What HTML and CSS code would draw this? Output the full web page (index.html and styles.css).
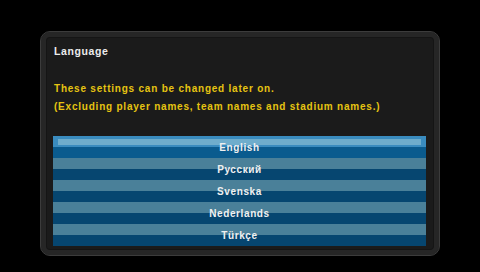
FILE: index.html
```html
<!DOCTYPE html>
<html>
<head>
<meta charset="utf-8">
<link rel="stylesheet" href="styles.css">
</head>
<body>
<div class="screen">
  <div class="panel">
    <div class="title">Language</div>
    <div class="notes">
      <div class="note">These settings can be changed later on.</div>
      <div class="note">(Excluding player names, team names and stadium names.)</div>
    </div>
    <ul class="list">
      <li class="item selected"><span>English</span></li>
      <li class="item"><span>Русский</span></li>
      <li class="item"><span>Svenska</span></li>
      <li class="item"><span>Nederlands</span></li>
      <li class="item"><span>Türkçe</span></li>
    </ul>
  </div>
</div>
</body>
</html>
```
FILE: styles.css
```css
html, body {
  margin: 0;
  padding: 0;
  background: #000;
}
.screen {
  width: 480px;
  height: 272px;
  padding: 31px 0 0 40px;
  box-sizing: border-box;
  font-family: "Liberation Sans", Arial, sans-serif;
}
.panel {
  width: 400px;
  height: 225px;
  box-sizing: border-box;
  border: 1px solid #3c3c3c;
  border-radius: 10px;
  background: #1b1b1b;
  box-shadow: inset 0 0 0 5px #262626, inset 0 0 0 6px #151515;
  padding: 11px 13px 9px 12px;
  display: flex;
  flex-direction: column;
}
.title {
  color: #ececec;
  font-weight: bold;
  font-size: 10.5px;
  letter-spacing: 0.6px;
  line-height: 16px;
  padding-left: 1px;
}
.notes {
  margin-top: 21px;
  padding-left: 1px;
}
.note {
  color: #e6c412;
  font-weight: bold;
  font-size: 10px;
  letter-spacing: 0.78px;
  line-height: 18px;
}
.list {
  list-style: none;
  margin: 20px 0 0 0;
  padding: 0;
}
.item {
  height: 22px;
  background: linear-gradient(to bottom, #4a8099 0, #4a8099 50%, #064670 50%, #064670 100%);
  display: flex;
  align-items: center;
  justify-content: center;
  color: #f0f0f0;
  font-weight: bold;
  font-size: 10px;
  letter-spacing: 0.6px;
  position: relative;
}
.item span {
  position: relative;
}
.item.selected {
  background: linear-gradient(to bottom, #3a8cbf 0, #3a8cbf 50%, #0a5b8e 50%, #0a5b8e 100%);
}
.item.selected::before {
  content: "";
  position: absolute;
  left: 5px;
  right: 5px;
  top: 3px;
  height: 6px;
  background: #6fadcc;
}
```
